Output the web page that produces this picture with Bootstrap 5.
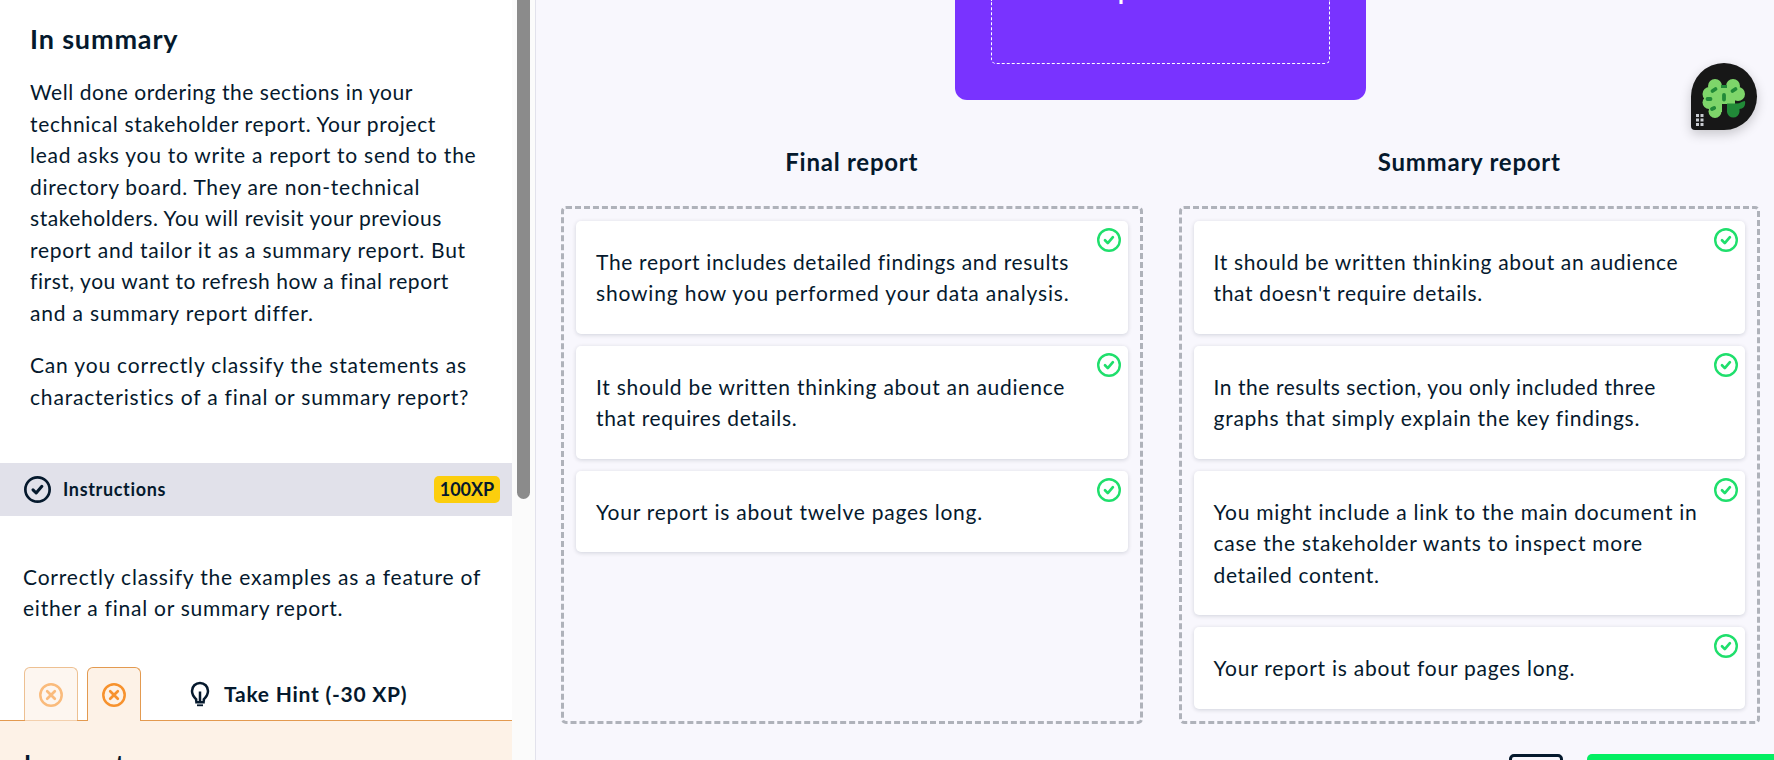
<!DOCTYPE html>
<html lang="en">
<head>
<meta charset="utf-8">
<title>Final or summary report</title>
<link href="https://cdn.jsdelivr.net/npm/bootstrap@5.3.0/dist/css/bootstrap.min.css" rel="stylesheet">
<style>
  body { font-family: Lato, "Noto Sans", sans-serif; font-size: 21px; line-height: 31.35px; font-variant-ligatures: none; color: #05192d; background: #f8f7fd; height: 760px; }
  .ln { white-space: nowrap; }
  .t5 { letter-spacing: .55px; }
  .t6 { letter-spacing: .66px; }
  .t7 { letter-spacing: .75px; }
  .t8 { letter-spacing: .82px; }
  .lesson { width: 512px; height: 760px; background: #fff; }
  .track { width: 24px; background: #fbfbfb; border-right: 1px solid #e2e2ec; padding-left: 5px; }
  .thumb { width: 13px; height: 499px; background: #8b8b8b; border-radius: 0 0 7px 7px; }
  .intro { height: 463px; padding: 20px 0 0 30px; line-height: 31.5px; }
  .intro h1 { font-size: 27px; line-height: 38px; font-weight: 700; margin-bottom: 18px; letter-spacing: .85px; }
  .intro p { margin-bottom: 21px; }
  .bar { height: 53px; background: #e1e1ea; padding: 0 12px 0 24px; gap: 12px; font-size: 18px; font-weight: 700; }
  .xp { width: 66px; height: 27px; border-radius: 5px; background: #fcce0d; line-height: 27px; }
  .task { height: 151px; padding: 45px 0 0 23px; }
  .tabs { height: 54px; padding-left: 24px; gap: 8.5px; }
  .tabx { width: 54px; height: 54px; border: 1px solid #e39a50; border-bottom: 0; border-radius: 6px 6px 0 0; background: #fdf2e7; color: #f7922d; position: relative; z-index: 1; }
  .tabx.old { opacity: .62; }
  .hint { font-weight: 700; margin-left: 41px; gap: 14px; }
  .feedback { height: 40px; margin-top: -1px; background: #fdf2e7; border-top: 1px solid #e39a50; padding: 28px 0 0 24px; font-size: 24px; line-height: 29px; font-weight: 700; letter-spacing: .5px; }
  .work { height: 760px; padding: 0 14px 0 25px; }
  .pile { width: 411px; height: 100px; background: #7933ff; border-radius: 0 0 12px 12px; margin-left: 394px; padding: 0 36px 36px; }
  .slot { height: 64px; border: 1px dashed #fff; border-top: 0; border-radius: 0 0 5px 5px; color: #fff; font-weight: 700; font-size: 24px; line-height: 30px; }
  .slot span { margin: -24.500px 0 0 126px; }
  .zones { column-gap: 36px; padding-top: 46px; }
  .zone { flex: 1 1 0; }
  .zone h2 { font-size: 24px; font-weight: 700; line-height: 32px; margin-bottom: 28px; text-align: center; letter-spacing: .75px; }
  .drop { height: 518px; border: 3px dashed #afb2ba; border-radius: 5px; padding: 12px; }
  .item { background: #fff; border-radius: 5px; box-shadow: 0 1px 4px rgba(5,25,45,.16); padding: 25px 20px; margin-bottom: 12.3px; position: relative; }
  .item svg { position: absolute; top: 7px; right: 7px; width: 24px; height: 24px; color: #1fdf6c; }
  .actions { padding-top: 30px; gap: 24px; }
  .square { width: 54px; height: 54px; border: 3px solid #05192d; border-radius: 5px; }
  .submit { width: 187px; height: 54px; background: #03ef62; border-radius: 5px 0 0 5px; margin-right: -14px; }
  .assist { position: absolute; left: 1691px; top: 63px; width: 66px; height: 67px; border-radius: 50% 50% 50% 4px; background: #171717; box-shadow: 0 4px 12px rgba(0,0,0,.2); }
</style>
</head>
<body class="d-flex overflow-hidden">
<svg class="d-none">
  <symbol id="ok" viewBox="0 0 24 24"><circle cx="12" cy="12" r="10.800" fill="none" stroke="currentColor" stroke-width="2.400"/><path d="M8 12.300l2.800 2.800L15.900 9.200" fill="none" stroke="currentColor" stroke-width="2.700" stroke-linecap="round" stroke-linejoin="round"/></symbol>
  <symbol id="no" viewBox="0 0 24 24"><circle cx="12" cy="12" r="10.700" fill="none" stroke="currentColor" stroke-width="2.500"/><path d="M8.200 8.200l7.600 7.600M15.800 8.200l-7.600 7.600" fill="none" stroke="currentColor" stroke-width="2.700" stroke-linecap="round"/></symbol>
</svg>
<aside class="lesson flex-shrink-0 overflow-hidden">
  <section class="intro">
    <h1>In summary</h1>
    <p><span class="ln t5">Well done ordering the sections in your</span><br><span class="ln t6">technical stakeholder report. Your project</span><br><span class="ln t7">lead asks you to write a report to send to the</span><br><span class="ln t7">directory board. They are non-technical</span><br><span class="ln t5">stakeholders. You will revisit your previous</span><br><span class="ln t7">report and tailor it as a summary report. But</span><br><span class="ln t5">first, you want to refresh how a final report</span><br><span class="ln t8">and a summary report differ.</span></p>
    <p><span class="ln t8">Can you correctly classify the statements as</span><br><span class="ln t8">characteristics of a final or summary report?</span></p>
  </section>
  <div class="bar d-flex align-items-center">
    <svg width="27" height="27"><use href="#ok"/></svg>
    <span class="ln t6">Instructions</span>
    <span class="xp ms-auto text-center">100XP</span>
  </div>
  <section class="task"><span class="ln t8">Correctly classify the examples as a feature of</span><br><span class="ln t7">either a final or summary report.</span></section>
  <div class="tabs d-flex">
    <div class="tabx old d-flex align-items-center justify-content-center"><svg width="24" height="24"><use href="#no"/></svg></div>
    <div class="tabx d-flex align-items-center justify-content-center"><svg width="24" height="24"><use href="#no"/></svg></div>
    <div class="hint d-flex align-items-center">
      <svg width="20" height="26" viewBox="0 0 20 26" fill="none" stroke="currentColor" stroke-width="2.5"><path d="M6.200 20.500v-2.200C4.200 16.300 2 13.800 2 9.900a8 8 0 0 1 16 0c0 3.900-2.200 6.400-4.200 8.400v2.200"/><path d="M10 10.500V20.500M5.200 21.300h9.600"/><path d="M7 24.300h6" stroke-width="1.800"/></svg>
      <span class="ln t7">Take Hint (-30 XP)</span>
    </div>
  </div>
  <div class="feedback">Incorrect</div>
</aside>
<div class="track flex-shrink-0"><div class="thumb"></div></div>
<main class="work flex-grow-1 overflow-hidden">
  <div class="pile"><div class="slot d-flex align-items-start"><span>p</span></div></div>
  <div class="zones d-flex">
    <section class="zone"><h2>Final report</h2><div class="drop">
      <div class="item"><span class="ln t6">The report includes detailed findings and results</span><br><span class="ln t8">showing how you performed your data analysis.</span><svg><use href="#ok"/></svg></div>
      <div class="item"><span class="ln t7">It should be written thinking about an audience</span><br><span class="ln t6">that requires details.</span><svg><use href="#ok"/></svg></div>
      <div class="item"><span class="ln t7">Your report is about twelve pages long.</span><svg><use href="#ok"/></svg></div>
    </div></section>
    <section class="zone"><h2>Summary report</h2><div class="drop">
      <div class="item"><span class="ln t6">It should be written thinking about an audience</span><br><span class="ln t6">that doesn't require details.</span><svg><use href="#ok"/></svg></div>
      <div class="item"><span class="ln t5">In the results section, you only included three</span><br><span class="ln t7">graphs that simply explain the key findings.</span><svg><use href="#ok"/></svg></div>
      <div class="item"><span class="ln t7">You might include a link to the main document in</span><br><span class="ln t7">case the stakeholder wants to inspect more</span><br><span class="ln t6">detailed content.</span><svg><use href="#ok"/></svg></div>
      <div class="item"><span class="ln t7">Your report is about four pages long.</span><svg><use href="#ok"/></svg></div>
    </div></section>
  </div>
  <div class="actions d-flex justify-content-end"><div class="square"></div><div class="submit"></div></div>
</main>
<div class="assist">
  <svg class="d-block" width="66" height="67" viewBox="0 0 66 67">
    <g fill="#7ed56a"><circle cx="24" cy="23" r="7"/><circle cx="18.500" cy="31" r="7"/><circle cx="18" cy="39.500" r="6.500"/><circle cx="24" cy="48.500" r="6.500"/><circle cx="42" cy="23" r="7"/><circle cx="47" cy="31" r="7"/><path d="M22 25h22v16H31v8H20V30z"/></g>
    <path fill="#218a38" d="M30 22h6v3h-6zM36 40.500h10c3 0 5-2.300 8-2.500 1 5-2 8-5.500 8v3a6.300 6.300 0 0 1-12.500 0z"/>
    <path d="M33 32v4.500M21.500 28l3-2M41.500 28l3-2M16.500 36h3M21 46l2.200-1" stroke="#218a38" stroke-width="3.800" stroke-linecap="round"/>
    <path fill="#c9ccd1" d="M5 51h3v3H5zM9.500 51h3v3h-3zM5 55.500h3v3H5zM9.500 55.500h3v3h-3zM5 60h3v3H5zM9.500 60h3v3h-3z"/>
  </svg>
</div>
<script src="https://cdn.jsdelivr.net/npm/bootstrap@5.3.0/dist/js/bootstrap.bundle.min.js"></script>
</body>
</html>
